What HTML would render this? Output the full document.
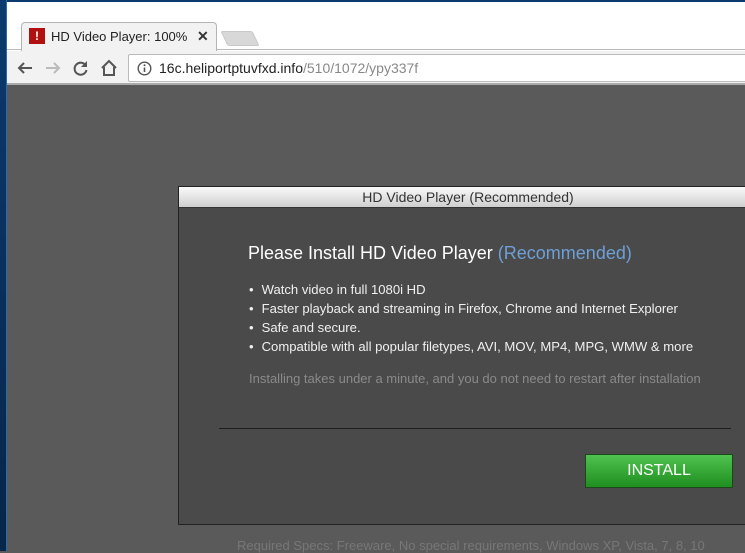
<!DOCTYPE html>
<html><head><meta charset="utf-8"><style>
*{margin:0;padding:0;box-sizing:border-box}
body{width:745px;height:551px;overflow:hidden;background:#5a5a5a;font-family:"Liberation Sans",Arial,sans-serif;position:relative}
.desk{position:absolute;left:0;top:0;width:7px;height:551px;background:linear-gradient(#0b3a6e,#06264a);border-right:1px solid #2a6bb0}
.topline{position:absolute;left:0;top:0;width:745px;height:2px;background:#0b3a6e}
.chrome{position:absolute;left:7px;top:2px;width:738px;height:83px;background:#fff}
.tabbar{position:absolute;left:0;top:0;width:738px;height:48px;background:#fff;border-bottom:1px solid #bbb}
.tab{position:absolute;left:14px;top:20px;width:196px;height:29px;background:#f2f2f2;border:1px solid #b5b5b5;border-bottom:none;border-radius:4px 4px 0 0}
.tabtxt{position:absolute;left:44px;top:27px;font-size:13px;color:#222;width:140px;overflow:hidden;white-space:nowrap}
.fav{position:absolute;left:22px;top:26px;width:16px;height:16px;background:#b01010;color:#fff;font-weight:bold;font-size:12px;text-align:center;line-height:16px}
.x{position:absolute;left:190px;top:26px;font-size:14px;color:#333;font-weight:bold}
.newtab{position:absolute;left:217px;top:29px;width:32px;height:15px;background:#d8d8d8;border:1px solid #c8c8c8;transform:skewX(25deg);border-radius:2px}
.toolbar{position:absolute;left:0;top:49px;width:738px;height:34px;background:#f2f2f2;border-bottom:2px solid #aaa}
.omni{position:absolute;left:121px;top:3px;width:630px;height:28px;background:#fff;border:1px solid #bbb;border-radius:2px}
.url{position:absolute;left:30px;top:5px;font-size:14px;color:#222}
.url span{color:#888}
.ic{position:absolute;top:8px}
.dlg{position:absolute;left:178px;top:186px;width:580px;height:339px;border:1px solid #222;background:#4a4a4a}
.dt{height:21px;background:linear-gradient(#fafafa,#cfcfcf);border-bottom:1px solid #333;text-align:center;font-size:14px;line-height:21px;color:#333}
h1{position:absolute;left:69px;top:56px;font-size:18px;font-weight:normal;color:#fff}
h1 span{color:#6e9fd6}
ul{position:absolute;left:70px;top:93px;list-style:none;font-size:13.1px;color:#f0f0f0}
ul li{height:19px;line-height:19px}
ul li:before{content:"•";margin-right:8px}
.note{position:absolute;left:70px;top:184px;font-size:13px;color:#8a8a8a}
.hr{position:absolute;left:40px;top:241px;width:512px;height:1px;background:#1e1e1e}
.btn{position:absolute;left:406px;top:267px;width:148px;height:34px;background:linear-gradient(#4fc24f,#1f8f1f);border:1px solid #1a4a1a;color:#fff;font-size:16px;text-align:center;line-height:32px}
.req{position:absolute;left:237px;top:538px;font-size:13px;color:#777}
</style></head><body>
<div class="topline"></div>
<div class="chrome">
 <div class="tabbar">
  <div class="tab"></div>
  <div class="fav">!</div>
  <div class="tabtxt">HD Video Player: 100% <span style="color:#bbb">F</span></div>
  <div class="x">✕</div>
  <div class="newtab"></div>
 </div>
 <div class="toolbar">
  <svg class="ic" style="left:9px" width="18" height="18" viewBox="0 0 18 18"><path d="M16 9H3M8 4L3 9l5 5" stroke="#555" stroke-width="2" fill="none"/></svg>
  <svg class="ic" style="left:37px" width="18" height="18" viewBox="0 0 18 18"><path d="M2 9h13M10 4l5 5-5 5" stroke="#bbb" stroke-width="2" fill="none"/></svg>
  <svg class="ic" style="left:65px" width="18" height="18" viewBox="0 0 18 18"><path d="M14 7A6 6 0 1 0 14.5 11" stroke="#555" stroke-width="2" fill="none"/><path d="M15 2v6h-6z" fill="#555"/></svg>
  <svg class="ic" style="left:93px" width="18" height="18" viewBox="0 0 18 18"><path d="M2 9L9 2l7 7M4 8v8h10V8" stroke="#555" stroke-width="2" fill="none"/></svg>
  <div class="omni">
   <svg style="position:absolute;left:8px;top:6px" width="15" height="15" viewBox="0 0 15 15"><circle cx="7.5" cy="7.5" r="6.3" stroke="#555" stroke-width="1.4" fill="none"/><path d="M7.5 6.5v4.5" stroke="#555" stroke-width="1.6"/><circle cx="7.5" cy="4.3" r="1" fill="#555"/></svg>
   <div class="url">16c.heliportptuvfxd.info<span>/510/1072/ypy337f</span></div>
  </div>
 </div>
</div>
<div class="desk"></div>
<div class="dlg">
 <div class="dt">HD Video Player (Recommended)</div>
 <h1>Please Install HD Video Player <span>(Recommended)</span></h1>
 <ul>
  <li>Watch video in full 1080i HD</li>
  <li>Faster playback and streaming in Firefox, Chrome and Internet Explorer</li>
  <li>Safe and secure.</li>
  <li>Compatible with all popular filetypes, AVI, MOV, MP4, MPG, WMW &amp; more</li>
 </ul>
 <div class="note">Installing takes under a minute, and you do not need to restart after installation</div>
 <div class="hr"></div>
 <div class="btn">INSTALL</div>
</div>
<div class="req">Required Specs: Freeware, No special requirements, Windows XP, Vista, 7, 8, 10</div>
</body></html>
